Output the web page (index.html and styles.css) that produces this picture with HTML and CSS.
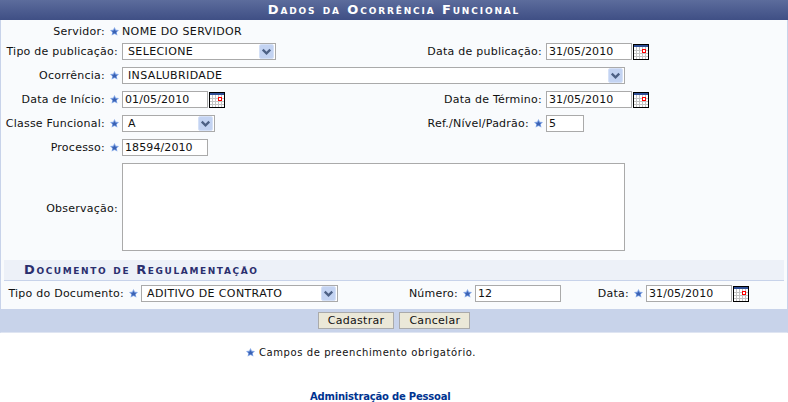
FILE: index.html
```html
<!DOCTYPE html>
<html lang="pt">
<head>
<meta charset="utf-8">
<title>Dados da Ocorrência Funcional</title>
<link rel="stylesheet" href="styles.css">
</head>
<body>
<svg class="defs" width="0" height="0" aria-hidden="true">
  <defs>
    <symbol id="star" viewBox="0 0 9 9">
      <path d="M4.5 0 L5.9 2.7 L9 3.1 L6.8 5.3 L7.4 8.6 L4.5 7.1 L1.6 8.6 L2.2 5.3 L0 3.1 L3.1 2.7 Z" fill="#7fa3e4"/>
      <path d="M4.5 2 L5.5 3.7 L7.2 4 L6 5.2 L6.3 7 L4.5 6.2 L2.7 7 L3 5.2 L1.8 4 L3.5 3.7 Z" fill="#3a62b4"/>
    </symbol>
    <symbol id="cal" viewBox="0 0 16 16">
      <rect x="0" y="0" width="16" height="16" fill="#000"/>
      <rect x="1" y="1" width="14" height="2" fill="#2f4f96"/>
      <rect x="1" y="3" width="14" height="12" fill="#fff"/>
      <path d="M1 6.5H15M1 9.5H15M1 12.5H15M3.5 3V15M6.5 3V15M9.5 3V15M12.5 3V15" stroke="#c4c4c4" stroke-width="1" fill="none"/>
      <rect x="9.5" y="5.5" width="3" height="3" fill="#fff" stroke="#f00" stroke-width="1"/>
    </symbol>
    <symbol id="arrow" viewBox="0 0 16 16">
      <rect x="0.5" y="0.5" width="15" height="15" rx="2" fill="#c3d3f2" stroke="#d4e0f6"/>
      <path d="M4 6 L8 10 L12 6" fill="none" stroke="#4d6185" stroke-width="2.4"/>
    </symbol>
  </defs>
</svg>

<form class="panel">
  <h1 class="panel-title">Dados da Ocorrência Funcional</h1>
  <div class="fields">
    <div class="label">Servidor:<svg class="star"><use href="#star"/></svg></div>
    <div class="wide value caps">NOME DO SERVIDOR</div>

    <div class="label plain">Tipo de publicação:</div>
    <div class="cell">
      <div class="select w154 caps"><span>SELECIONE</span><svg class="arrow"><use href="#arrow"/></svg></div>
    </div>
    <div class="label plain">Data de publicação:</div>
    <div class="cell">
      <div class="input w86">31/05/2010</div><svg class="cal"><use href="#cal"/></svg>
    </div>

    <div class="label">Ocorrência:<svg class="star"><use href="#star"/></svg></div>
    <div class="wide">
      <div class="select w503 caps"><span>INSALUBRIDADE</span><svg class="arrow"><use href="#arrow"/></svg></div>
    </div>

    <div class="label">Data de Início:<svg class="star"><use href="#star"/></svg></div>
    <div class="cell">
      <div class="input w86">01/05/2010</div><svg class="cal"><use href="#cal"/></svg>
    </div>
    <div class="label plain">Data de Término:</div>
    <div class="cell">
      <div class="input w86">31/05/2010</div><svg class="cal"><use href="#cal"/></svg>
    </div>

    <div class="label">Classe Funcional:<svg class="star"><use href="#star"/></svg></div>
    <div class="cell">
      <div class="select w93 caps"><span>A</span><svg class="arrow"><use href="#arrow"/></svg></div>
    </div>
    <div class="label">Ref./Nível/Padrão:<svg class="star"><use href="#star"/></svg></div>
    <div class="cell">
      <div class="input w38">5</div>
    </div>

    <div class="label">Processo:<svg class="star"><use href="#star"/></svg></div>
    <div class="wide">
      <div class="input w86">18594/2010</div>
    </div>

    <div class="label plain obs">Observação:</div>
    <div class="wide">
      <div class="textarea"></div>
    </div>
  </div>

  <h2 class="section-title">Documento de Regulamentação</h2>

  <div class="doc-row">
    <div class="label doc-type">Tipo do Documento:<svg class="star"><use href="#star"/></svg></div>
    <div class="select w197 caps"><span>ADITIVO DE CONTRATO</span><svg class="arrow"><use href="#arrow"/></svg></div>
    <div class="label doc-num">Número:<svg class="star"><use href="#star"/></svg></div>
    <div class="input w86">12</div>
    <div class="label doc-date">Data:<svg class="star"><use href="#star"/></svg></div>
    <div class="input w86">31/05/2010</div><svg class="cal"><use href="#cal"/></svg>
  </div>

  <div class="actions">
    <button type="button" class="btn">Cadastrar</button>
    <button type="button" class="btn">Cancelar</button>
  </div>
</form>

<p class="note"><svg class="star"><use href="#star"/></svg>Campos de preenchimento obrigatório.</p>
<p class="footer-link">Administração de Pessoal</p>
</body>
</html>
```

FILE: styles.css
```css
* { box-sizing: border-box; }

html, body {
  margin: 0;
  padding: 0;
  background: #fff;
}

body {
  font-family: "DejaVu Sans", Verdana, sans-serif;
  font-size: 11px;
  color: #111;
  height: 402px;
  overflow: hidden;
}

.defs { display: block; height: 0; }

.panel {
  margin: 0;
  background: #f9fbfd;
  border-left: 1px solid #c8d3ea;
  border-right: 1px solid #c8d3ea;
  border-bottom: 1px solid #dfe5f2;
}

.panel-title {
  margin: 0 -1px;
  height: 20px;
  line-height: 20px;
  text-align: center;
  font-size: 13px;
  font-weight: bold;
  font-variant: small-caps;
  letter-spacing: 1.85px;
  color: #fff;
  background: linear-gradient(#5c6c9c, #3f4f85);
}

.fields {
  display: grid;
  grid-template-columns: 121px 296px 128px 1fr;
  grid-template-rows: 10px repeat(5, 17px) 88px;
  row-gap: 7px;
  padding-top: 6px;
  align-items: center;
}

.label {
  display: flex;
  justify-content: flex-end;
  align-items: center;
  gap: 5px;
  white-space: nowrap;
  padding-right: 3px;
  line-height: 17px;
  letter-spacing: 0.24px;
}

.plain { padding-right: 4px; }
.obs { padding-top: 2px; }

.star {
  width: 9px;
  height: 9px;
  flex: none;
  display: block;
}

.wide { grid-column: 2 / 5; }
.value { line-height: 17px; }
.caps { letter-spacing: 0.38px; }

.cell {
  display: flex;
  align-items: center;
  gap: 1px;
}

.input, .select, .textarea {
  height: 17px;
  background: #fff;
  border: 1px solid #aaa;
  line-height: 15px;
  color: #111;
}

.input { padding-left: 2px; letter-spacing: 0.1px; }

.select {
  display: flex;
  justify-content: space-between;
  align-items: center;
  padding: 0 1px 0 5px;
}

.textarea {
  width: 503px;
  height: 88px;
}

.w38 { width: 38px; }
.w86 { width: 86px; }
.w93 { width: 93px; }
.w154 { width: 154px; }
.w197 { width: 197px; }
.w503 { width: 503px; }

.arrow { width: 15px; height: 15px; flex: none; }
.cal { width: 16px; height: 16px; flex: none; }

.section-title {
  margin: 9px 3px 0;
  height: 21px;
  padding-left: 20px;
  line-height: 20px;
  font-size: 13px;
  font-weight: bold;
  font-variant: small-caps;
  letter-spacing: 1.6px;
  color: #2b2f6e;
  background: #edf1f8;
  border-bottom: 1px solid #c8d3ea;
}

.doc-row {
  display: flex;
  align-items: center;
  height: 17px;
  margin-top: 4px;
}

.doc-row .cal { margin-left: 1px; }
.doc-type { width: 140px; }
.doc-num { width: 137px; }
.doc-date { width: 85px; }

.actions {
  display: flex;
  justify-content: center;
  gap: 5px;
  margin-top: 7px;
  padding: 3px 0 2px;
  height: 23px;
  background: #c8d3ea;
}

.btn {
  height: 17px;
  padding: 0 9px;
  font: 11px "DejaVu Sans", Verdana, sans-serif;
  letter-spacing: 0.3px;
  color: #111;
  background: #ebe8d8;
  border: 1px solid #aaa;
  line-height: 15px;
}

.note {
  margin: 13px 0 0 246px;
  display: flex;
  align-items: center;
  gap: 4px;
  font-size: 10px;
  line-height: 13px;
  letter-spacing: 0.58px;
}

.footer-link {
  margin: 31px 0 0;
  padding-left: 310px;
  font-size: 10px;
  font-weight: bold;
  line-height: 13px;
  letter-spacing: -0.2px;
  color: #003390;
}
```
